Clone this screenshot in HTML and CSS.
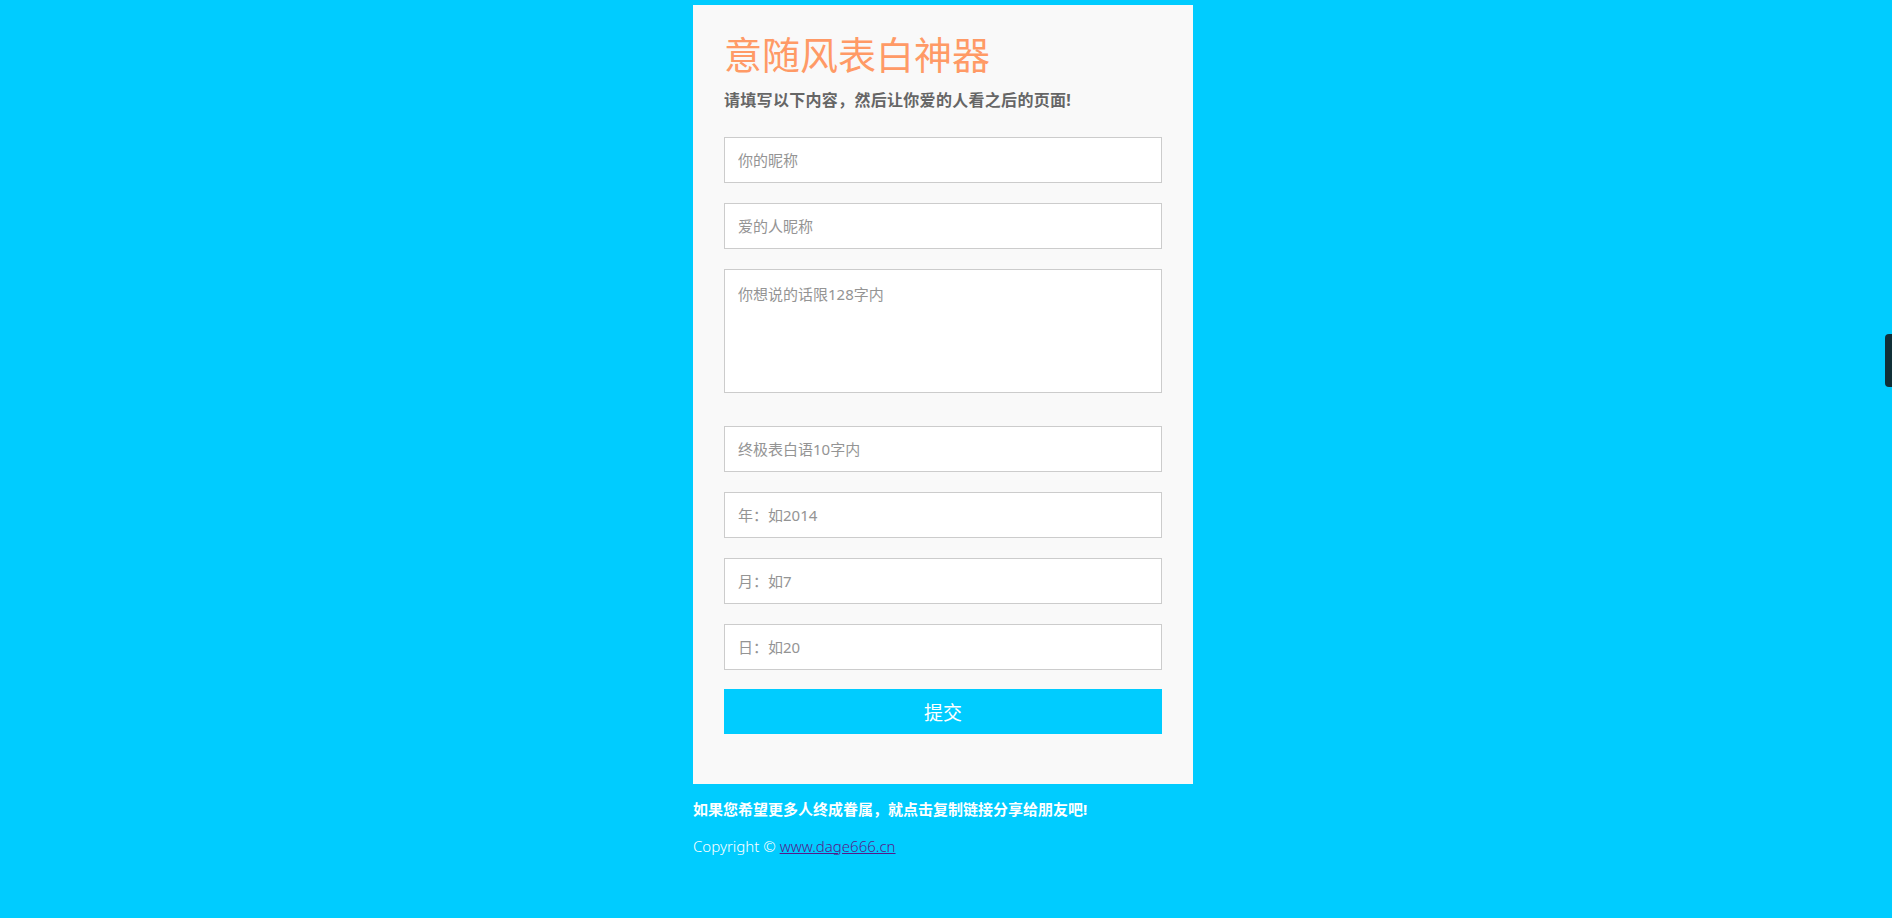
FILE: index.html
```
<!DOCTYPE html>
<html lang="zh-CN">
  <head>
    <meta charset="utf-8" />
    <meta name="viewport" content="width=device-width, initial-scale=1.0">
    <title>意随风表白神器</title>
    <link rel="stylesheet" href="styles.css">
  </head>
  <body>

    <div class="wrap">
      <div class="card">
        <h1 class="title">意随风表白神器</h1>
        <p class="sub">请填写以下内容，然后让你爱的人看之后的页面!</p>

        <form class="form" onsubmit="return false">
          <input class="field" type="text" placeholder="你的昵称">
          <input class="field" type="text" placeholder="爱的人昵称">
          <textarea class="field area" placeholder="你想说的话限128字内"></textarea>
          <input class="field gap" type="text" placeholder="终极表白语10字内">
          <input class="field" type="text" placeholder="年：如2014">
          <input class="field" type="text" placeholder="月：如7">
          <input class="field" type="text" placeholder="日：如20">
          <button class="submit">提交</button>
        </form>
      </div>

      <p class="share">如果您希望更多人终成眷属，就点击复制链接分享给朋友吧!</p>
      <p class="copy">Copyright &copy; <a href="#">www.dage666.cn</a></p>
    </div>

    <!-- side tab from a browser extension -->
    <div class="sidetab"></div>

  </body>
</html>
```
FILE: styles.css
```
body {
  margin: 0;
  background-color: #00ccff;
  font-family: "Noto Sans", "Noto Sans CJK SC", sans-serif;
}

.wrap {
  width: 500px;
  margin-left: calc(50% - 253px);
  padding-top: 5px;
}

.card {
  background-color: #f9f9f9;
  padding: 31px 31px 50px 31px;
}

.title {
  margin: 0;
  font-size: 38px;
  line-height: 37px;
  font-weight: normal;
  color: #ff9a66;
}

.sub {
  margin: 19px 0 0;
  font-size: 16px;
  line-height: 16px;
  letter-spacing: 0.3px;
  font-weight: bold;
  color: #666;
}

.form {
  display: flex;
  flex-direction: column;
  margin-top: 29px;
}

.field {
  box-sizing: border-box;
  width: 100%;
  height: 46px;
  margin: 0 0 20px;
  padding: 0 13px;
  border: 1px solid #ccc;
  background: #fff;
  font-family: "Noto Sans", "Noto Sans CJK SC", sans-serif;
  font-size: 15px;
  color: #555;
  outline: none;
}

.field::placeholder {
  color: #949494;
}

.area {
  height: 124px;
  padding-top: 13px;
  resize: none;
}

.gap {
  margin-top: 13px;
}

.submit {
  height: 45px;
  margin-top: -1px;
  border: 0;
  background-color: #00ccff;
  color: #fff;
  font-family: "Noto Sans", "Noto Sans CJK SC", sans-serif;
  font-size: 19px;
}

.share {
  margin: 18px 0 0;
  font-size: 15px;
  line-height: 15px;
  font-weight: bold;
  color: #fff;
}

.copy {
  margin: 19px 0 0;
  font-size: 15px;
  line-height: 20px;
  font-weight: 300;
  color: #fff;
}

.copy a {
  color: #551a8b;
}

.sidetab {
  position: fixed;
  right: 0;
  top: 334px;
  width: 7px;
  height: 53px;
  border-radius: 4px 0 0 4px;
  background-color: #0f3038;
}
```
